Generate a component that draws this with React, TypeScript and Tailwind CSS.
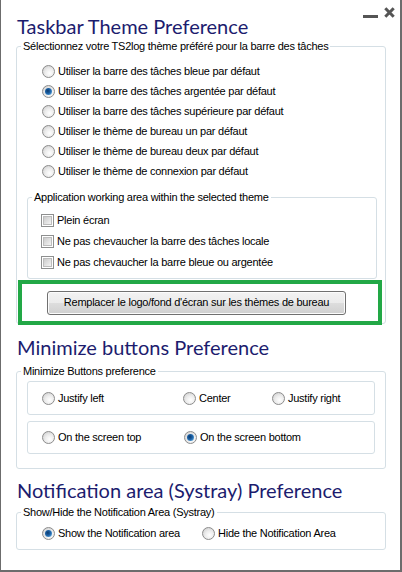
import type { ReactNode } from "react";

function Radio({ checked = false }: { checked?: boolean }) {
  return (
    <span className="flex h-[13px] w-[13px] shrink-0 items-center justify-center rounded-full border border-[#8c8c8c] bg-[radial-gradient(circle_at_60%_65%,#ffffff_0%,#ececec_45%,#c8c8c8_100%)]">
      {checked && (
        <span className="h-[7px] w-[7px] rounded-full bg-[radial-gradient(circle_at_40%_40%,#0b3a6e_0%,#1d63a8_45%,#7cc3ee_100%)]" />
      )}
    </span>
  );
}

function Checkbox() {
  return (
    <span className="flex h-[13px] w-[13px] shrink-0 items-center justify-center border border-[#8e8f8f] bg-white">
      <span className="h-[9px] w-[9px] bg-[linear-gradient(135deg,#cbcbcb,#f4f4f4)] border border-[#bdbdbd]" />
    </span>
  );
}

function Option({ checked, children, box }: { checked?: boolean; children: ReactNode; box?: boolean }) {
  return (
    <div className={"flex items-center gap-[3px] " + (box ? "h-[21px]" : "h-[20px]")}>
      {box ? <Checkbox /> : <Radio checked={checked} />}
      <span className="whitespace-nowrap">{children}</span>
    </div>
  );
}

function Group({ legend, className, children }: { legend: string; className?: string; children: ReactNode }) {
  return (
    <fieldset className={"rounded-[3px] border border-[#d5dfe5] " + (className ?? "")}>
      <legend className="ml-[4px] px-[2px] leading-[13px]">{legend}</legend>
      {children}
    </fieldset>
  );
}

function Title({ children, className }: { children: ReactNode; className?: string }) {
  return (
    <h2 className={"pl-[1px] font-['Lato',sans-serif] text-[20px] leading-[27px] tracking-normal text-[#1c1c6e] " + (className ?? "")}>
      {children}
    </h2>
  );
}

export default function App() {
  return (
    <div className="relative h-[572px] w-[402px] border-b-2 border-l border-r-2 border-[#6c6c6c] bg-white font-['Liberation_Sans',Arial,sans-serif] text-[11px] tracking-[-0.25px] text-black">
      <div className="absolute right-[22px] top-[15px] h-[3px] w-[15px] bg-[#555]" />
      <svg className="absolute right-[5px] top-[7px]" width="11" height="11" viewBox="0 0 11 11">
        <path d="M1.3 1.3 L9.7 9.7 M9.7 1.3 L1.3 9.7" stroke="#555" strokeWidth="3" />
      </svg>

      <div className="pl-[15px] pr-[14px] pt-[13px]">
        <Title>Taskbar Theme Preference</Title>
        <Group legend="Sélectionnez votre TS2log thème préféré pour la barre des tâches">
          <div className="pl-[25px] pt-[8px]">
            <Option>Utiliser la barre des tâches bleue par défaut</Option>
            <Option checked>Utiliser la barre des tâches argentée par défaut</Option>
            <Option>Utiliser la barre des tâches supérieure par défaut</Option>
            <Option>Utiliser le thème de bureau un par défaut</Option>
            <Option>Utiliser le thème de bureau deux par défaut</Option>
            <Option>Utiliser le thème de connexion par défaut</Option>
          </div>
          <Group legend="Application working area within the selected theme" className="ml-[10px] mr-[8px] mt-[10px]">
            <div className="pl-[13px] pb-[5px] pt-[6px]">
              <Option box>Plein écran</Option>
              <Option box>Ne pas chevaucher la barre des tâches locale</Option>
              <Option box>Ne pas chevaucher la barre bleue ou argentée</Option>
            </div>
          </Group>
          <div className="relative z-10 mb-[-2px] ml-[1px] mr-[3px] mt-[1px] flex h-[45px] items-center justify-center border-4 border-[#22a846] pr-[7px]">
            <button className="h-[24px] w-[299px] rounded-[3px] border border-[#707070] bg-[linear-gradient(#f3f3f3_0%,#ebebeb_50%,#dddddd_51%,#d0d0d0_100%)] shadow-[inset_0_0_0_1px_#fcfcfc] text-[11px]">
              Remplacer le logo/fond d'écran sur les thèmes de bureau
            </button>
          </div>
        </Group>

        <Title className="mt-[10px]">Minimize buttons Preference</Title>
        <Group legend="Minimize Buttons preference" className="mt-[4px]">
          <div className="mx-[10px] mt-[3px] flex h-[34px] items-center rounded-[3px] border border-[#d5dfe5] pl-[14px]">
            <div className="w-[141px]"><Option>Justify left</Option></div>
            <div className="w-[89px]"><Option>Center</Option></div>
            <Option>Justify right</Option>
          </div>
          <div className="mx-[10px] mb-[14px] mt-[6px] flex h-[33px] items-center rounded-[3px] border border-[#d5dfe5] pl-[14px]">
            <div className="w-[142px]"><Option>On the screen top</Option></div>
            <Option checked>On the screen bottom</Option>
          </div>
        </Group>

        <Title className="mt-[8px]">Notification area (Systray) Preference</Title>
        <Group legend="Show/Hide the Notification Area (Systray)" className="mt-[2px]">
          <div className="flex pb-[6px] pl-[25px] pt-[4px]">
            <div className="w-[160px]"><Option checked>Show the Notification area</Option></div>
            <Option>Hide the Notification Area</Option>
          </div>
        </Group>
      </div>
    </div>
  );
}
